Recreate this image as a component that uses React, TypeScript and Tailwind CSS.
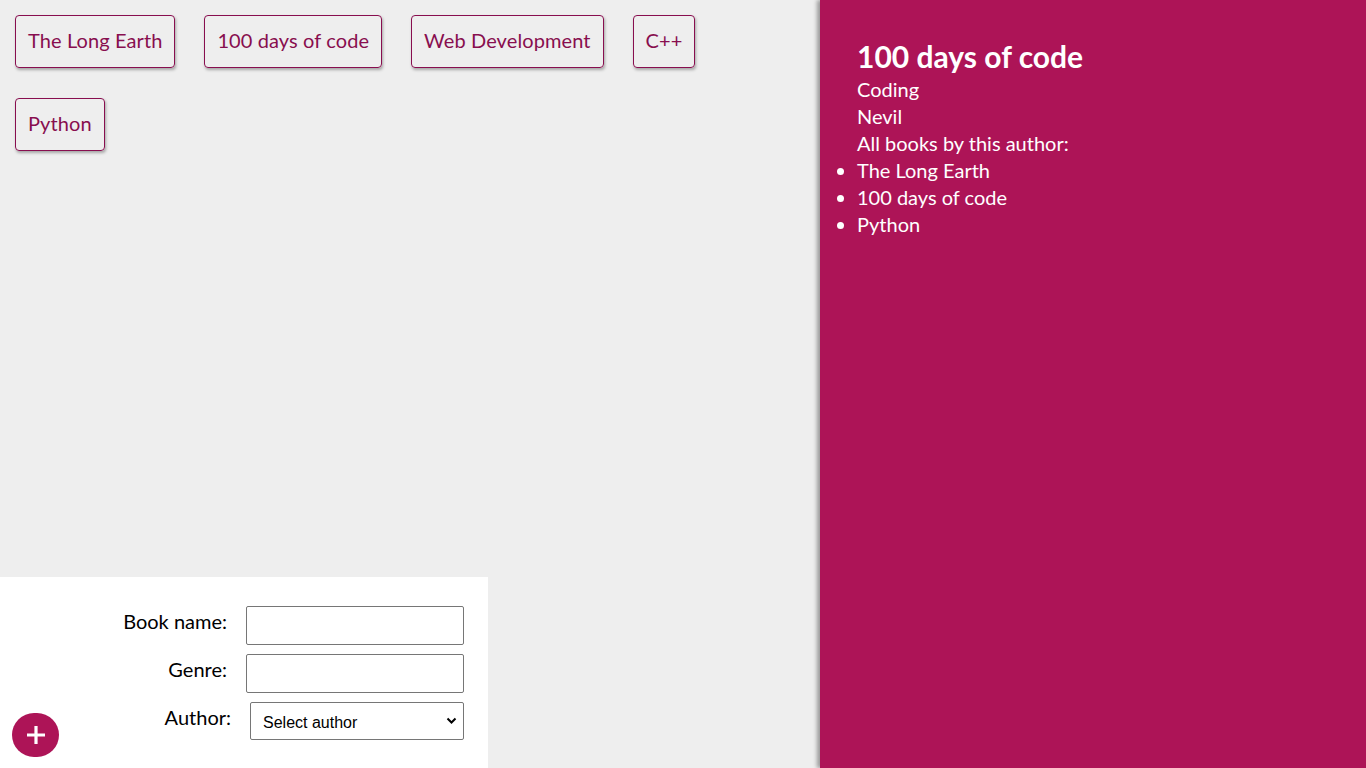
import React from 'react'

const books = ['The Long Earth', '100 days of code', 'Web Development', 'C++', 'Python']
const authorBooks = ['The Long Earth', '100 days of code', 'Python']

export default function App() {
  return (
    <div className="flex h-[768px] w-[1366px] overflow-hidden font-['Lato','Open_Sans',sans-serif]">
      <div className="flex h-full w-[820px] flex-col bg-[#eeeeee]">
        {/* book list */}
        <ul className="flex flex-wrap gap-x-[29px] gap-y-[30px] pl-[15px] pr-[40px] pt-[15px]">
          {books.map(b => (
            <li key={b}
              className="flex h-[53px] items-center rounded-[4px] border border-[#880e4f] px-[12px] pb-[3px] text-[20px] tracking-[0.1px] text-[#880e4f] shadow-[1px_2px_3px_rgba(0,0,0,0.3)]">
              {b}
            </li>
          ))}
        </ul>

        {/* add book form */}
        <div className="relative mt-auto h-[191px] w-[488px] bg-white pt-[29px]">
          <div className="flex h-[39px] items-center">
            <label className="-mt-[10px] w-[227px] text-right text-[20px] text-black">Book name:</label>
            <input type="text" className="ml-[19px] h-[39px] w-[218px] rounded-[2px] border border-[#767676] bg-white" />
          </div>
          <div className="mt-[9px] flex h-[39px] items-center">
            <label className="-mt-[10px] w-[227px] text-right text-[20px] text-black">Genre:</label>
            <input type="text" className="ml-[19px] h-[39px] w-[218px] rounded-[2px] border border-[#767676] bg-white" />
          </div>
          <div className="mt-[9px] flex h-[38px] items-center">
            <label className="-mt-[8px] w-[231px] text-right text-[20px] text-black">Author:</label>
            <div className="relative ml-[19px] h-[38px] w-[214px] rounded-[2px] border border-[#767676] bg-white">
              <span className="absolute left-[12px] top-[8px] font-['Liberation_Sans',Arial,sans-serif] text-[16px] text-black">Select author</span>
              <svg className="absolute right-[6px] top-[14px]" width="11" height="8" viewBox="0 0 11 8">
                <path d="M1.5 1.5 L5.5 5.5 L9.5 1.5" fill="none" stroke="#000" strokeWidth="2" />
              </svg>
            </div>
          </div>
          <button className="absolute left-[12px] top-[136px] flex h-[44px] w-[47px] items-center justify-center rounded-full bg-[#ad1457] text-white">
            <svg width="20" height="20" viewBox="0 0 20 20">
              <path d="M10 1 V19 M1 10 H19" stroke="#fff" strokeWidth="3.2" />
            </svg>
          </button>
        </div>
      </div>

      {/* book details */}
      <div className="relative h-full w-[546px] bg-[#ad1457] pl-[37px] pt-[39px] text-white shadow-[-3px_0_4px_rgba(0,0,0,0.35)]">
        <h2 className="text-[30px] font-bold leading-[34px]">100 days of code</h2>
        <div className="mt-[3px] text-[20px] leading-[27px]">
          <p>Coding</p>
          <p>Nevil</p>
          <p>All books by this author:</p>
          <ul className="list-disc">
            {authorBooks.map(b => <li key={b}>{b}</li>)}
          </ul>
        </div>
      </div>
    </div>
  )
}
